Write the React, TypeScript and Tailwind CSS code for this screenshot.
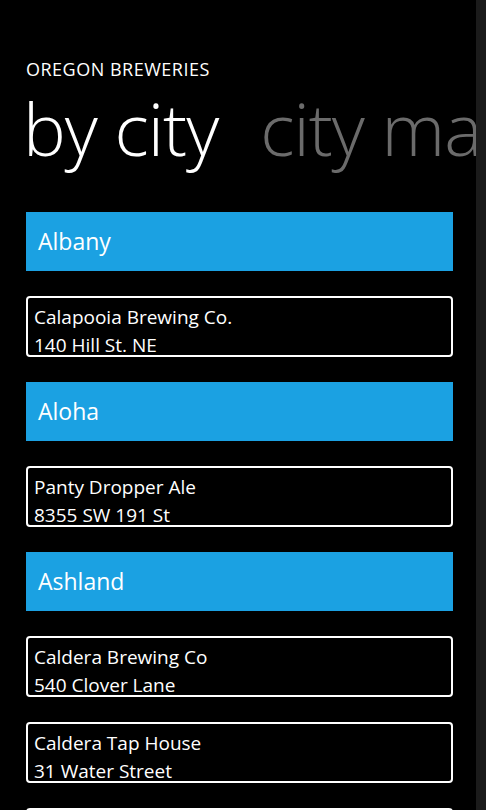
const cities = [
  {
    name: "Albany",
    places: [{ title: "Calapooia Brewing Co.", address: "140 Hill St. NE" }],
  },
  {
    name: "Aloha",
    places: [{ title: "Panty Dropper Ale", address: "8355 SW 191 St" }],
  },
  {
    name: "Ashland",
    places: [
      { title: "Caldera Brewing Co", address: "540 Clover Lane" },
      { title: "Caldera Tap House", address: "31 Water Street" },
      { title: "Standing Stone Brewing", address: "101 Oak Street" },
    ],
  },
];

const App = () => {
  return (
    <div className="flex w-[486px] h-[810px] overflow-hidden bg-[#1b1b1b] font-['Open_Sans',sans-serif] text-white">
      <div className="w-[476px] h-[810px] overflow-hidden bg-black pl-[26px]">
        <div className="pt-[58px] text-[18px] leading-[22px] tracking-[0.5px]">OREGON BREWERIES</div>
        <div className="flex gap-[42px] whitespace-nowrap mt-[6px] ml-[-3px] text-[72px] leading-[84px] font-light tracking-[-1px]">
          <span>by city</span>
          <span className="text-[#6b6b6b]">city map</span>
        </div>
        <div className="mt-[42px] w-[427px] flex flex-col gap-[25px]">
          {cities.map((city) => (
            <div key={city.name} className="flex flex-col gap-[25px]">
              <div className="h-[59px] bg-[#1ba1e2] flex items-center pl-[12px] text-[23px]">
                {city.name}
              </div>
              {city.places.map((p) => (
                <div
                  key={p.title}
                  className="h-[61px] border-2 border-white rounded-[4px] pl-[6px] pt-[5px] text-[19px] leading-[28px]"
                >
                  <div>{p.title}</div>
                  <div>{p.address}</div>
                </div>
              ))}
            </div>
          ))}
        </div>
      </div>
    </div>
  );
};

export default App;
